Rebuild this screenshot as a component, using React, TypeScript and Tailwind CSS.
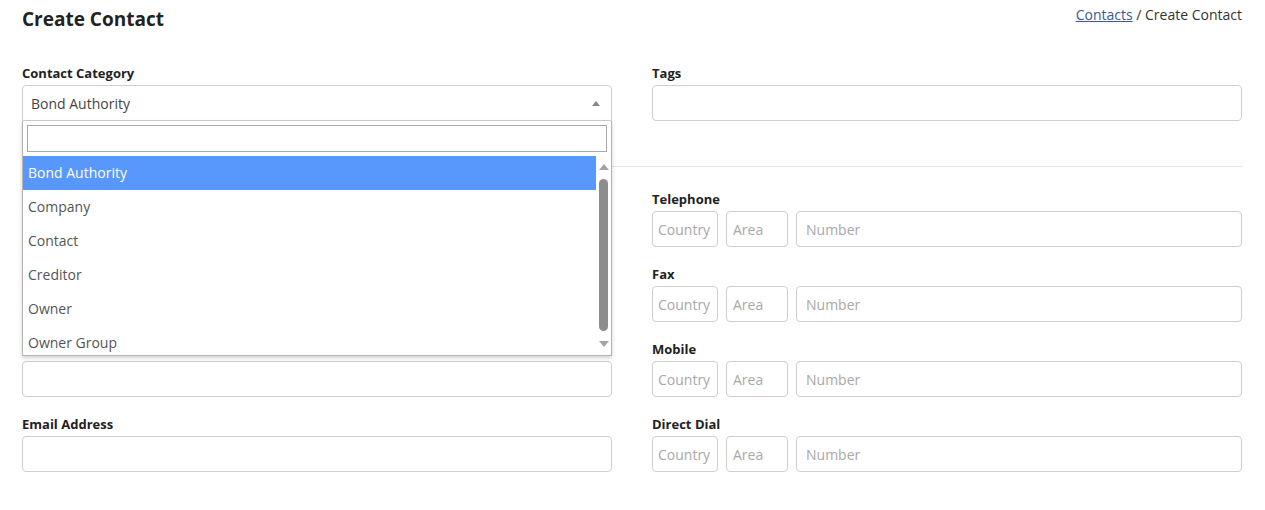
import React from 'react';

const font = { fontFamily: '"Open Sans", "Noto Sans", Arial, sans-serif' };

const inputCls = 'block w-full h-9 rounded border border-[#cfcfcf] bg-white px-[9px] text-[14px] text-[#444] placeholder:text-[#a8a8a8] outline-none';

const Label: React.FC<{ children: React.ReactNode }> = ({ children }) => (
  <label className="block h-4 mb-1 text-[13px] leading-4 font-bold text-[#222]">{children}</label>
);

const PhoneField: React.FC<{ label: string }> = ({ label }) => (
  <div>
    <Label>{label}</Label>
    <div className="flex gap-2">
      <input className={`${inputCls} !w-[66px] !px-[5px] shrink-0`} placeholder="Country" />
      <input className={`${inputCls} !w-[62px] !px-[6px] shrink-0`} placeholder="Area" />
      <input className={`${inputCls} flex-1`} placeholder="Number" />
    </div>
  </div>
);

const TextField: React.FC<{ label: string }> = ({ label }) => (
  <div>
    <Label>{label}</Label>
    <input className={inputCls} />
  </div>
);

const options = ['Bond Authority', 'Company', 'Contact', 'Creditor', 'Owner', 'Owner Group'];

const Dropdown: React.FC = () => (
  <div className="absolute left-0 top-full z-10 w-full h-[235px] border border-[#b5b5b5] border-t-0 bg-white shadow-[0_2px_4px_rgba(0,0,0,0.18)] flex flex-col">
    <div className="p-1">
      <input className="block w-full h-[27px] border border-[#a9a9a9] outline-none px-1 text-[14px]" />
    </div>
    <div className="flex flex-1 overflow-hidden">
      <ul className="flex-1 overflow-hidden">
        {options.map((o, i) => (
          <li
            key={o}
            className={`h-[34px] leading-[34px] pl-[5px] text-[14px] ${i === 0 ? 'bg-[#5897fb] text-white' : 'text-[#555]'}`}
          >
            {o}
          </li>
        ))}
      </ul>
      <div className="w-[15px] flex flex-col items-center pt-[8px] pb-[8px]">
        <svg width="10" height="6" viewBox="0 0 10 6"><path d="M5 0 L10 6 L0 6 Z" fill="#a3a3a3" /></svg>
        <div className="w-[9px] h-[152px] mt-[9px] rounded-full bg-[#8d8d8d]" />
        <div className="flex-1" />
        <svg width="10" height="6" viewBox="0 0 10 6"><path d="M0 0 L10 0 L5 6 Z" fill="#a3a3a3" /></svg>
      </div>
    </div>
  </div>
);

export default function App() {
  return (
    <div className="min-h-[510px] bg-white px-[22px] pr-[23px] text-[#333]" style={font}>
      <div className="flex justify-between items-start pt-[6px] h-[65px]">
        <h1 className="text-[19px] leading-[26px] font-bold text-[#222]">Create Contact</h1>
        <div className="text-[14px] leading-[20px] -mt-[1px]">
          <a className="text-[#3b5998] underline">Contacts</a>
          <span> / Create Contact</span>
        </div>
      </div>

      <div className="grid grid-cols-2 gap-x-10">
        <div>
          <Label>Contact Category</Label>
          <div className="relative">
            <div className="flex items-center h-9 rounded border border-[#cfcfcf] rounded-b-none px-2 text-[14px] text-[#444]">
              <span className="flex-1">Bond Authority</span>
              <svg width="8" height="5" viewBox="0 0 8 5" className="mr-[3px]"><path d="M4 0 L8 5 L0 5 Z" fill="#888" /></svg>
            </div>
            <Dropdown />
          </div>
        </div>
        <TextField label="Tags" />
      </div>

      <div className="mt-[45px] border-t border-[#e6e6e6]" />

      <div className="grid grid-cols-2 gap-x-10 mt-[24px]">
        <div className="flex flex-col gap-[19px]">
          <TextField label="Name" />
          <TextField label="Company" />
          <TextField label="Position" />
          <TextField label="Email Address" />
        </div>
        <div className="flex flex-col gap-[19px]">
          <PhoneField label="Telephone" />
          <PhoneField label="Fax" />
          <PhoneField label="Mobile" />
          <PhoneField label="Direct Dial" />
        </div>
      </div>
    </div>
  );
}
